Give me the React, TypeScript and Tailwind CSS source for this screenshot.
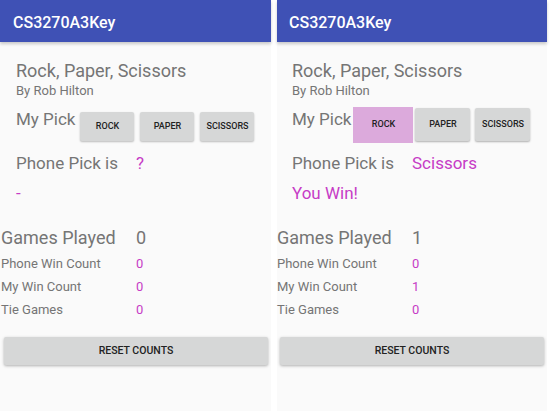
type Pick = {
  name: string;
  selected?: boolean;
};

type PanelProps = {
  inset?: boolean;
  picked?: string;
  phonePick: string;
  result: string;
  played: number;
  phoneWins: number;
  myWins: number;
  ties: number;
};

const gray = "text-[#757575]";
const purple = "text-[#c63cc6]";

function PickButton({ name, selected }: Pick) {
  if (selected) {
    return (
      <div className="w-[60px] h-[36px] bg-[#dcaadc] flex items-center justify-center text-[9px] font-medium text-[#222]">
        {name}
      </div>
    );
  }
  return (
    <div className="w-[54px] h-[29px] mt-[5px] bg-[#d6d7d7] rounded-[2px] shadow-[0_1px_2px_rgba(0,0,0,0.25)] flex items-center justify-center text-[9px] font-medium text-[#222]">
      {name}
    </div>
  );
}

function Panel({ inset, picked, phonePick, result, played, phoneWins, myWins, ties }: PanelProps) {
  const stats = [
    { label: "Phone Win Count", value: phoneWins },
    { label: "My Win Count", value: myWins },
    { label: "Tie Games", value: ties },
  ];
  return (
    <div className={`h-[411px] bg-[#fafafa] flex flex-col ${inset ? "w-[271px] pl-px" : "w-[270px]"}`}>
      <div className={`h-[42px] bg-[#3f51b5] flex items-center pt-[3px] pl-[12px] shadow-[0_2px_3px_rgba(0,0,0,0.2)] ${inset ? "-ml-px pl-[13px]" : ""}`}>
        <span className="text-white text-[16px] font-medium">CS3270A3Key</span>
      </div>

      <div className="pl-[15px] pt-[17px]">
        <div className={`text-[18px] leading-[24px] ${gray}`}>Rock, Paper, Scissors</div>
        <div className={`text-[13px] leading-[16px] ${gray}`}>By Rob Hilton</div>
      </div>

      <div className="flex items-start mt-[8px] h-[36px] pl-[15px]">
        <span className={`text-[17px] leading-[19px] mt-[3px] ${gray}`}>My Pick</span>
        {picked === "ROCK" ? (
          <div className="flex items-start ml-[2px] gap-[2px]">
            <PickButton name="ROCK" selected />
            <div className="flex gap-[5px]">
              <div className="w-[55px] h-[33px] mt-px bg-[#d6d7d7] rounded-[2px] shadow-[0_1px_2px_rgba(0,0,0,0.3)] flex items-center justify-center text-[9px] font-medium text-[#222]">
                PAPER
              </div>
              <div className="w-[55px] h-[33px] mt-px bg-[#d6d7d7] rounded-[2px] shadow-[0_1px_2px_rgba(0,0,0,0.3)] flex items-center justify-center text-[9px] font-medium text-[#222]">
                SCISSORS
              </div>
            </div>
          </div>
        ) : (
          <div className="flex items-start ml-[5px] gap-[6px]">
            <PickButton name="ROCK" />
            <PickButton name="PAPER" />
            <PickButton name="SCISSORS" />
          </div>
        )}
      </div>

      <div className="flex mt-[9.5px] pl-[15px] text-[17px] leading-[20px]">
        <span className={`w-[120px] ${gray}`}>Phone Pick is</span>
        <span className={purple}>{phonePick}</span>
      </div>
      <div className={`mt-[10px] pl-[15px] text-[17px] leading-[20px] ${purple}`}>{result}</div>

      <div className="flex mt-[23.5px] text-[18px] leading-[24px]">
        <span className={`w-[135px] ${gray}`}>Games Played</span>
        <span className={gray}>{played}</span>
      </div>
      <div className="mt-[2.4px] flex flex-col">
        {stats.map((s) => (
          <div key={s.label} className="flex text-[13px] leading-[23px]">
            <span className={`w-[135px] ${gray}`}>{s.label}</span>
            <span className={purple}>{s.value}</span>
          </div>
        ))}
      </div>

      <div className="mt-[15.6px] ml-[3px] w-[264px] h-[28px] bg-[#d6d7d7] rounded-[2px] shadow-[0_1px_3px_rgba(0,0,0,0.3)] flex items-center justify-center text-[10.5px] font-medium text-[#222]">
        RESET COUNTS
      </div>
    </div>
  );
}

export default function App() {
  return (
    <div className="w-[553px] h-[411px] bg-white flex gap-[6px] overflow-hidden font-['Roboto',sans-serif]">
      <Panel inset phonePick="?" result="-" played={0} phoneWins={0} myWins={0} ties={0} />
      <Panel picked="ROCK" phonePick="Scissors" result="You Win!" played={1} phoneWins={0} myWins={1} ties={0} />
    </div>
  );
}
